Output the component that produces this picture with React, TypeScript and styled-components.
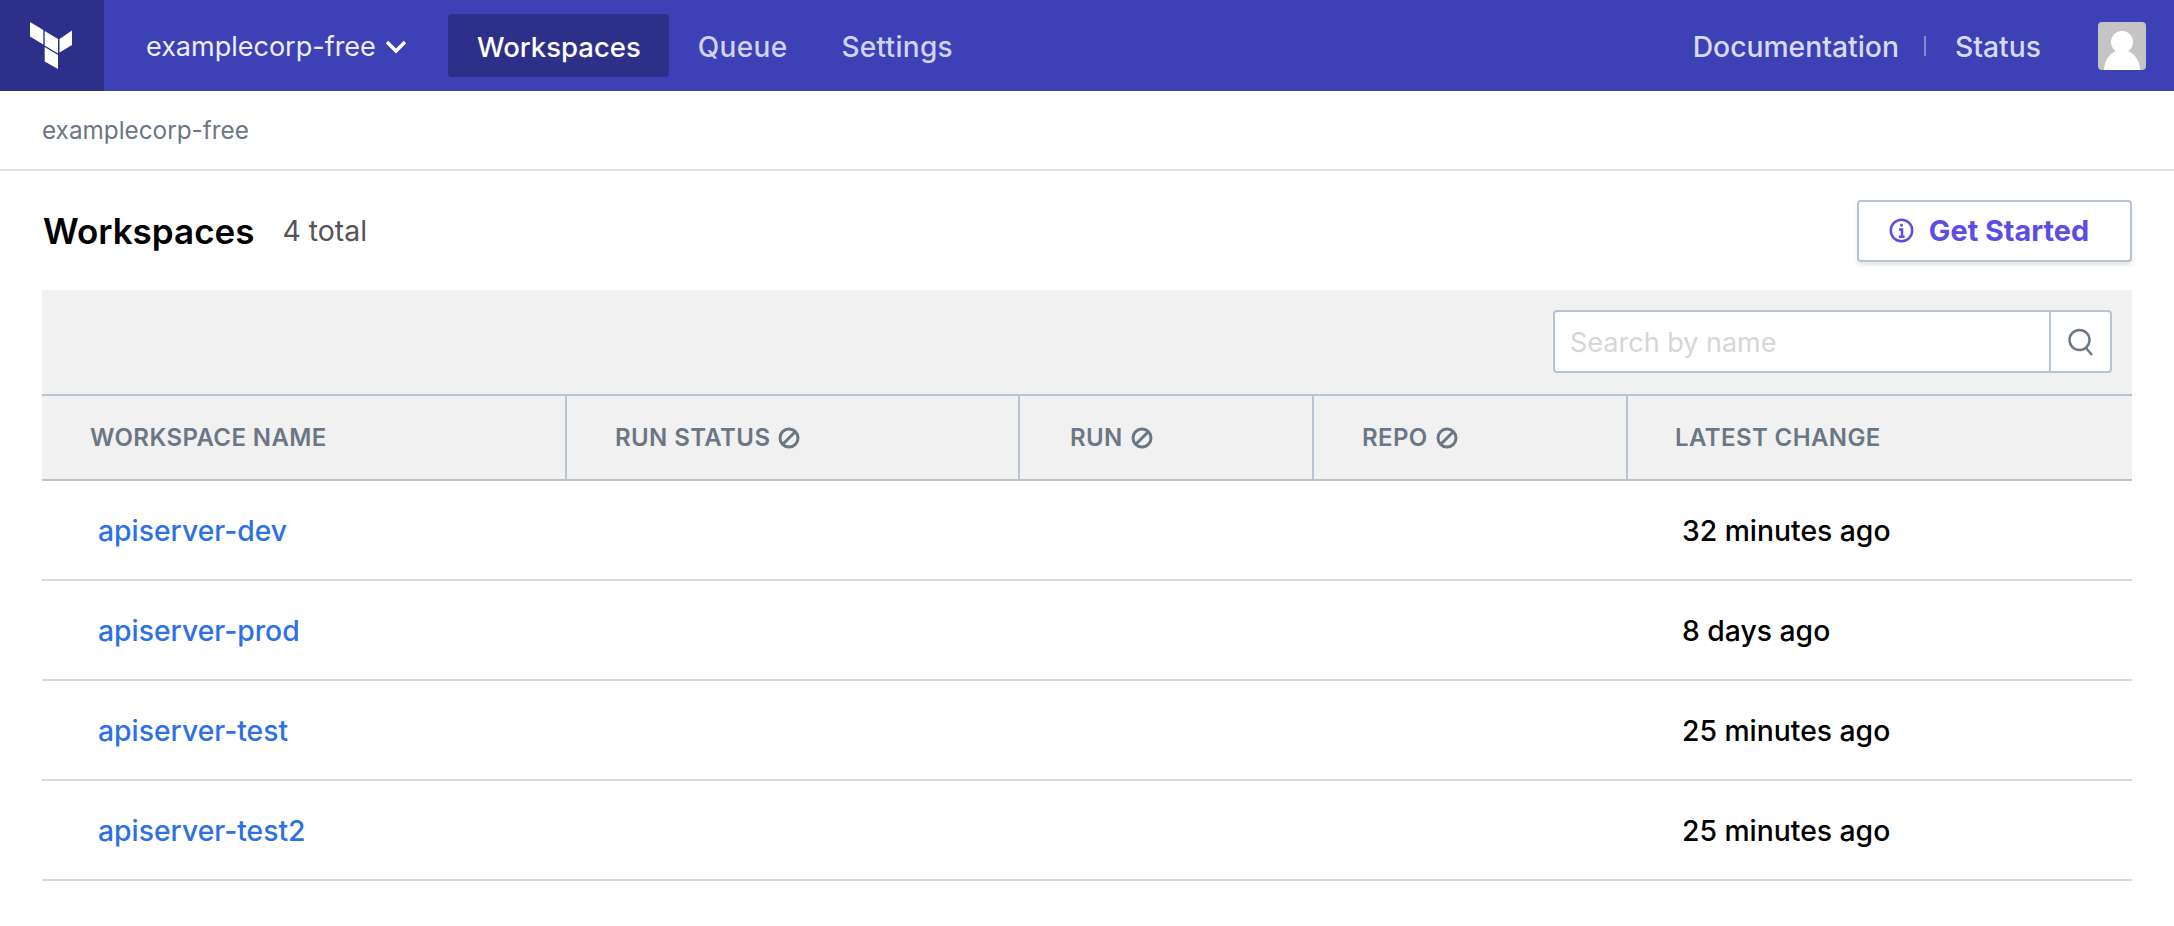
import React from "react";
import styled, { createGlobalStyle } from "styled-components";

const Global = createGlobalStyle`
  html, body { margin: 0; padding: 0; background: #fff; }
  body { font-family: Inter, "Liberation Sans", sans-serif; -webkit-font-smoothing: antialiased; }
`;

const Page = styled.div`
  width: 2174px;
  height: 926px;
  overflow: hidden;
`;

const Nav = styled.nav`
  height: 91px;
  background: #3e40b5;
  display: flex;
  align-items: center;
`;

const LogoBox = styled.div`
  width: 104px;
  height: 91px;
  background: #2e2f88;
  flex: none;
  display: flex;
  svg { display: block; }
`;

const OrgSwitch = styled.div`
  margin-left: 42px;
  width: 302px;
  padding-top: 2px;
  box-sizing: border-box;
  display: flex;
  align-items: center;
  gap: 9px;
  color: #eceefb;
  font-size: 27px;
  font-weight: 400;
`;

const Tab = styled.a<{ $active?: boolean }>`
  height: 63px;
  box-sizing: border-box;
  padding: ${(p) => (p.$active ? "2px 28px 0 29px" : "2px 27px 0")};
  margin-right: ${(p) => (p.$active ? "2px" : "0")};
  display: flex;
  align-items: center;
  border-radius: 4px;
  font-size: ${(p) => (p.$active ? "27.5px" : "28px")};
  letter-spacing: ${(p) => (p.$active ? "0" : "0.3px")};
  font-weight: 500;
  color: ${(p) => (p.$active ? "#ffffff" : "#d0d2f2")};
  background: ${(p) => (p.$active ? "#2e2f88" : "transparent")};
`;

const NavRight = styled.div`
  margin-left: auto;
  padding-right: 28px;
  display: flex;
  align-items: center;
`;

const NavLink = styled.a`
  padding-top: 2px;
  font-size: 28.3px;
  font-weight: 500;
  color: #d8daf5;
`;

const NavSep = styled.span`
  width: 2px;
  height: 20px;
  margin: 0 29px 0 25px;
  background: #8587cf;
`;

const Avatar = styled.div`
  width: 48px;
  height: 48px;
  margin-left: 57px;
  border-radius: 4px;
  overflow: hidden;
  background: #c4c4c4;
  svg { display: block; }
`;

const Crumbs = styled.div`
  height: 80px;
  box-sizing: border-box;
  padding-left: 42px;
  display: flex;
  align-items: center;
  border-bottom: 2px solid #e2e2e2;
  font-size: 24.3px;
  color: #6b7785;
  padding-bottom: 1px;
`;

const Main = styled.main`
  padding: 0 42px;
`;

const Head = styled.header`
  height: 119px;
  display: flex;
  align-items: center;
  padding-left: 1px;
`;

const Title = styled.h1`
  margin: 0;
  font-size: 35px;
  font-weight: 600;
  color: #000;
`;

const Count = styled.span`
  margin-left: 28px;
  font-size: 28.4px;
  color: #555;
`;

const StartButton = styled.button`
  margin-left: auto;
  width: 275px;
  height: 62px;
  box-sizing: border-box;
  border: 2px solid #b8c4d4;
  border-radius: 4px;
  background: #fff;
  box-shadow: 0 3px 4px rgba(37, 38, 45, 0.12);
  display: flex;
  align-items: center;
  justify-content: center;
  gap: 15px;
  font-family: inherit;
  font-size: 28.8px;
  font-weight: 700;
  color: #5c4ee5;
  padding: 0 11px 0 0;
  svg { display: block; }
`;

const Toolbar = styled.div`
  height: 104px;
  box-sizing: border-box;
  background: #f1f1f1;
  padding: 20px 20px 0 0;
  display: flex;
  justify-content: flex-end;
  align-items: flex-start;
`;

const Search = styled.div`
  width: 559px;
  height: 63px;
  box-sizing: border-box;
  border: 2px solid #b8c4d4;
  border-radius: 4px;
  background: #fff;
  display: flex;
`;

const SearchInput = styled.input`
  flex: 1;
  min-width: 0;
  border: none;
  outline: none;
  background: transparent;
  padding: 2px 15px 0;
  font-family: inherit;
  font-size: 27px;
  color: #333;
  &::placeholder { color: #d6d6d6; opacity: 1; }
`;

const SearchIcon = styled.div`
  width: 59px;
  border-left: 2px solid #b8c4d4;
  display: flex;
  align-items: center;
  justify-content: center;
  svg { display: block; }
`;

const Grid = `
  display: grid;
  grid-template-columns: 523px 453px 294px 314px 1fr;
`;

const HeaderRow = styled.div`
  ${Grid}
  height: 87px;
  box-sizing: border-box;
  background: #f1f1f1;
  border-top: 2px solid #b8c4d4;
  border-bottom: 2px solid #b8c4d4;
`;

const HeaderCell = styled.div<{ $first?: boolean; $pad: number }>`
  display: flex;
  align-items: center;
  gap: 8px;
  box-sizing: border-box;
  padding-left: ${(p) => p.$pad}px;
  border-left: ${(p) => (p.$first ? "none" : "2px solid #b8c4d4")};
  font-size: 24px;
  font-weight: 600;
  letter-spacing: 0.4px;
  color: #6b7785;
  svg { display: block; }
`;

const Row = styled.div`
  ${Grid}
  height: 100px;
  box-sizing: border-box;
  border-bottom: 2px solid #d8d8d8;
  align-items: center;
`;

const NameLink = styled.a`
  grid-column: 1 / 5;
  padding: 2px 0 0 56px;
  font-size: 28.3px;
  font-weight: 500;
  color: #2e71e5;
`;

const Changed = styled.span`
  padding: 2px 0 0 56px;
  font-size: 28.3px;
  font-weight: 500;
  color: #000;
`;

const Ban = () => (
  <svg width="22" height="22" viewBox="0 0 22 22" fill="none" stroke="#6b7785" strokeWidth="3">
    <circle cx="11" cy="11" r="9" />
    <path d="M5 17 17 5" />
  </svg>
);

const rows = [
  ["apiserver-dev", "32 minutes ago"],
  ["apiserver-prod", "8 days ago"],
  ["apiserver-test", "25 minutes ago"],
  ["apiserver-test2", "25 minutes ago"],
];

export default function App() {
  return (
    <Page>
      <Global />
      <Nav>
        <LogoBox>
          <svg width="104" height="91" viewBox="0 0 104 91" fill="#fff">
            <polygon points="30,22 43.3,30 43.3,44.5 30,36.5" />
            <polygon points="44.7,31 58,39 58,53.5 44.7,45.5" />
            <polygon points="59.5,39 72,30.5 72,45 59.5,52.5" />
            <polygon points="44.7,47 58,55 58,69 44.7,61.5" />
          </svg>
        </LogoBox>
        <OrgSwitch>
          examplecorp-free
          <svg width="22" height="14" viewBox="0 0 22 14" fill="none" stroke="#fff" strokeWidth="3.4">
            <path d="M2 2l9 9 9-9" />
          </svg>
        </OrgSwitch>
        <Tab $active>Workspaces</Tab>
        <Tab>Queue</Tab>
        <Tab>Settings</Tab>
        <NavRight>
          <NavLink>Documentation</NavLink>
          <NavSep />
          <NavLink>Status</NavLink>
          <Avatar>
            <svg width="48" height="48" viewBox="0 0 48 48" fill="#fff">
              <circle cx="24" cy="20" r="11" />
              <path d="M6 48C6 37 14 28 24 28s18 9 18 20z" />
            </svg>
          </Avatar>
        </NavRight>
      </Nav>
      <Crumbs>examplecorp-free</Crumbs>
      <Main>
        <Head>
          <Title>Workspaces</Title>
          <Count>4 total</Count>
          <StartButton>
            <svg width="25" height="25" viewBox="0 0 24 24" fill="none" stroke="#5c4ee5" strokeWidth="2.4">
              <circle cx="12" cy="12" r="10.3" />
              <path d="M9.5 11h3v7M9.5 18h5.5" />
              <circle cx="12" cy="7" r="1.4" fill="#5c4ee5" stroke="none" />
            </svg>
            Get Started
          </StartButton>
        </Head>
        <Toolbar>
          <Search>
            <SearchInput placeholder="Search by name" />
            <SearchIcon>
              <svg width="28" height="28" viewBox="0 0 28 28" fill="none" stroke="#6b7785" strokeWidth="2.4">
                <circle cx="12.5" cy="12" r="10" />
                <path d="M19 20l6 7" />
              </svg>
            </SearchIcon>
          </Search>
        </Toolbar>
        <HeaderRow>
          <HeaderCell $first $pad={48}>WORKSPACE NAME</HeaderCell>
          <HeaderCell $pad={48}>RUN STATUS <Ban /></HeaderCell>
          <HeaderCell $pad={50}>RUN <Ban /></HeaderCell>
          <HeaderCell $pad={48}>REPO <Ban /></HeaderCell>
          <HeaderCell $pad={47}>LATEST CHANGE</HeaderCell>
        </HeaderRow>
        {rows.map(([name, when]) => (
          <Row key={name}>
            <NameLink>{name}</NameLink>
            <Changed>{when}</Changed>
          </Row>
        ))}
      </Main>
    </Page>
  );
}
